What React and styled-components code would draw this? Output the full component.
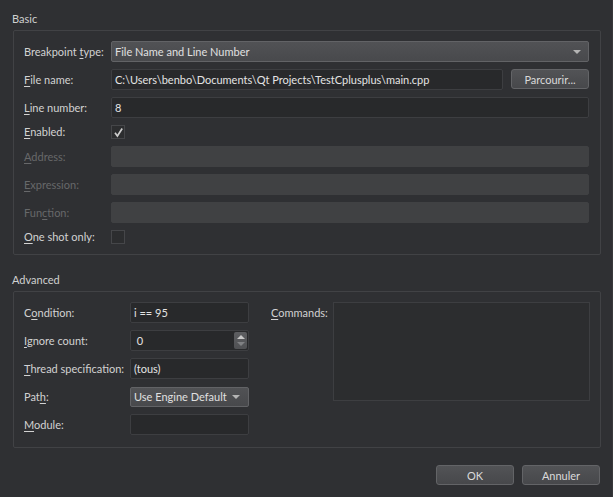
import React from "react";
import styled, { createGlobalStyle } from "styled-components";

const Global = createGlobalStyle`
  html, body { margin: 0; padding: 0; background: #2f3033; }
  body { font-family: Lato, "Liberation Sans", sans-serif; font-size: 11px; color: #d2d2d2; }
`;

const Dialog = styled.div`
  width: 613px;
  height: 497px;
  box-sizing: border-box;
  background: #2f3033;
  padding: 11px 12px 0 12px;
  display: flex;
  flex-direction: column;
  border-right: 1px solid #38393b;
`;

const GroupTitle = styled.div`
  line-height: 16px;
  height: 16px;
  margin-top: ${(p) => p.$top || 0}px;
  margin-bottom: 3px;
  color: #d0d0d0;
`;

const GroupBox = styled.div`
  margin-left: 1px;
  width: 588px;
  box-sizing: border-box;
  border: 1px solid #414245;
  border-radius: 2px;
  padding: 10px 11px ${(p) => p.$pb || 10}px 10px;
`;

const BasicGrid = styled.div`
  display: grid;
  grid-template-columns: 87px 1fr;
  row-gap: 7px;
  align-items: center;
`;

const Label = styled.label`
  grid-column: ${(p) => p.$col || "auto"};
  grid-row: ${(p) => p.$row || "auto"};
  color: ${(p) => (p.$disabled ? "#67686a" : "#d2d2d2")};
  white-space: nowrap;
  line-height: 14px;
  u { text-decoration: underline; text-underline-offset: 2px; }
`;

const FieldRow = styled.div`
  display: flex;
  gap: 8px;
  height: ${(p) => p.$h || 21}px;
  align-items: stretch;
`;

const Input = styled.div`
  flex: 1;
  box-sizing: border-box;
  height: 21px;
  background: ${(p) => (p.$disabled ? "#404143" : "#28292b")};
  border: 1px solid ${(p) => (p.$disabled ? "#404143" : "#3d3e41")};
  border-radius: 2px;
  padding: 0 3px;
  display: flex;
  align-items: center;
  color: #e4e4e4;
  white-space: nowrap;
  overflow: hidden;
  position: relative;
`;

const Combo = styled.div`
  flex: 1;
  box-sizing: border-box;
  height: ${(p) => p.$h || 21}px;
  background: linear-gradient(#515255, #48494c);
  border: 1px solid #626366;
  border-radius: 2px;
  padding: 0 3px;
  display: flex;
  align-items: center;
  justify-content: space-between;
  color: #e0e0e0;
  white-space: nowrap;
`;

const Arrow = styled.span`
  width: 0;
  height: 0;
  border-left: 4px solid transparent;
  border-right: 4px solid transparent;
  border-top: 4px solid #b4b4b4;
  margin-right: ${(p) => p.$mr || 4}px;
`;

const Button = styled.button`
  box-sizing: border-box;
  width: ${(p) => p.$w || 78}px;
  height: ${(p) => p.$h || 20}px;
  background: linear-gradient(#525356, #47484b);
  border: 1px solid #636467;
  border-radius: 3px;
  color: #dadada;
  font-family: inherit;
  font-size: 11px;
  padding: 0;
  display: flex;
  align-items: center;
  justify-content: center;
`;

const Check = styled.div`
  width: 14px;
  height: 14px;
  box-sizing: border-box;
  border: 1px solid #454649;
  background: #2c2d2f;
  display: flex;
  align-items: center;
  justify-content: center;
`;

const AdvGrid = styled.div`
  display: grid;
  grid-template-columns: 106px 119px 22px 62px 1fr;
  grid-auto-rows: 21px;
  row-gap: 7px;
  align-items: center;
`;

const Commands = styled.div`
  grid-column: 5;
  grid-row: 1 / span 4;
  align-self: start;
  height: 99px;
  box-sizing: border-box;
  margin-right: -1px;
  background: #2c2d2f;
  border: 1px solid #3d3e41;
`;

const Spin = styled.div`
  position: absolute;
  right: 1px;
  top: 1px;
  bottom: 1px;
  width: 13px;
  background: linear-gradient(#5d5e61, #505154);
  border-radius: 2px;
  display: flex;
  flex-direction: column;
  align-items: center;
  justify-content: center;
  gap: 3px;
`;

const Tri = styled.span`
  width: 0;
  height: 0;
  border-left: 4px solid transparent;
  border-right: 4px solid transparent;
  ${(p) => (p.$up ? "border-bottom: 4px solid #c8c8c8;" : "border-top: 4px solid #808184;")}
`;

const Footer = styled.div`
  display: flex;
  justify-content: flex-end;
  gap: 8px;
  margin-top: 17px;
`;

const CheckMark = () => (
  <svg width="11" height="11" viewBox="0 0 11 11">
    <path d="M2 5.8 L4.4 9 L9.2 1.5" fill="none" stroke="#cdcdcd" strokeWidth="1.7" />
  </svg>
);

export default function App() {
  return (
    <>
      <Global />
      <Dialog>
        <GroupTitle>Basic</GroupTitle>
        <GroupBox>
          <BasicGrid>
            <Label>Breakpoint <u>t</u>ype:</Label>
            <FieldRow>
              <Combo>
                File Name and Line Number
                <Arrow $mr={4} />
              </Combo>
            </FieldRow>

            <Label><u>F</u>ile name:</Label>
            <FieldRow>
              <Input>C:\Users\benbo\Documents\Qt Projects\TestCplusplus\main.cpp</Input>
              <Button $w={78}>Parcourir...</Button>
            </FieldRow>

            <Label><u>L</u>ine number:</Label>
            <FieldRow>
              <Input>8</Input>
            </FieldRow>

            <Label><u>E</u>nabled:</Label>
            <FieldRow $h={14}>
              <Check><CheckMark /></Check>
            </FieldRow>

            <Label $disabled><u>A</u>ddress:</Label>
            <FieldRow>
              <Input $disabled />
            </FieldRow>

            <Label $disabled><u>E</u>xpression:</Label>
            <FieldRow>
              <Input $disabled />
            </FieldRow>

            <Label $disabled>Fun<u>c</u>tion:</Label>
            <FieldRow>
              <Input $disabled />
            </FieldRow>

            <Label><u>O</u>ne shot only:</Label>
            <FieldRow $h={14}>
              <Check />
            </FieldRow>
          </BasicGrid>
        </GroupBox>

        <GroupTitle $top={17}>Advanced</GroupTitle>
        <GroupBox $pb={12}>
          <AdvGrid>
            <Label $col={1}>C<u>o</u>ndition:</Label>
            <Input>i == 95</Input>
            <Label $col={4} $row={1}><u>C</u>ommands:</Label>
            <Commands />

            <Label $col={1}><u>I</u>gnore count:</Label>
            <Input>
              &nbsp;0
              <Spin>
                <Tri $up />
                <Tri />
              </Spin>
            </Input>

            <Label $col={1}><u>T</u>hread specification:</Label>
            <Input>(tous)</Input>

            <Label $col={1}>Pat<u>h</u>:</Label>
            <Combo $h={20}>
              Use Engine Default
              <Arrow $mr={5} />
            </Combo>

            <Label $col={1}><u>M</u>odule:</Label>
            <Input />
          </AdvGrid>
        </GroupBox>

        <Footer>
          <Button>OK</Button>
          <Button>Annuler</Button>
        </Footer>
      </Dialog>
    </>
  );
}
